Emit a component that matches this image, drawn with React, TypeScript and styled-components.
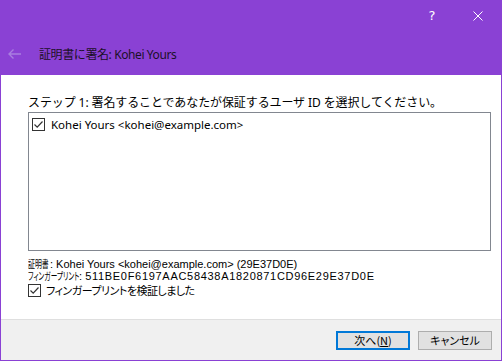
import React from "react";
import styled, { createGlobalStyle } from "styled-components";

const PURPLE = "#8a41d4";

const Global = createGlobalStyle`
  html, body { margin: 0; padding: 0; background: #ffffff; }
  body { font-family: "Noto Sans", "Noto Sans CJK JP", sans-serif; }
  * { box-sizing: border-box; }
`;

const Window = styled.div`
  width: 502px;
  height: 361px;
  display: flex;
  flex-direction: column;
  border: 1px solid ${PURPLE};
  border-top: none;
  background: #ffffff;
  overflow: hidden;
`;

const TitleBar = styled.div`
  height: 75px;
  background: ${PURPLE};
  display: flex;
  flex-direction: column;
`;

const CaptionRow = styled.div`
  height: 31px;
  display: flex;
  justify-content: flex-end;
  align-items: center;
`;

const CaptionButton = styled.div`
  width: 46px;
  height: 31px;
  display: flex;
  align-items: center;
  justify-content: center;
  color: #ffffff;
  font-family: "DejaVu Sans", sans-serif;
  font-size: 13px;
`;

const HeadingRow = styled.div`
  display: flex;
  align-items: center;
  height: 44px;
  padding: 2px 0 0 7px;
`;

const BackArrow = styled.div`
  width: 31px;
  display: flex;
  align-items: center;
`;

const Heading = styled.div`
  font-family: "Noto Sans", "Noto Sans CJK JP", sans-serif;
  font-size: 12px;
  color: #1b1028;
  letter-spacing: -0.4px;
`;

const Content = styled.div`
  flex: 1;
  display: flex;
  flex-direction: column;
  padding: 21px 10px 0 27px;
  font-family: "Noto Sans", "Noto Sans CJK JP", sans-serif;
  font-size: 12px;
  color: #000000;
`;

const StepText = styled.div`
  line-height: 14px;
  height: 16px;
  white-space: nowrap;
  letter-spacing: -0.1px;
`;

const ListBox = styled.div`
  height: 139px;
  border: 1px solid #828790;
  padding: 2px 3px;
`;

const CheckRow = styled.label<{ $gap: number; $h: number }>`
  display: flex;
  align-items: center;
  gap: ${(p) => p.$gap}px;
  height: ${(p) => p.$h}px;
`;

const Box = styled.span`
  width: 13px;
  height: 13px;
  border: 1px solid #333333;
  background: #ffffff;
  display: flex;
  align-items: center;
  justify-content: center;
  flex: none;
`;

const ItemText = styled.span`
  color: #000000;
  font-size: 11.5px;
`;

const CertInfo = styled.div`
  margin-top: 7px;
  font-family: "Liberation Sans", "Noto Sans CJK JP", sans-serif;
  font-size: 11px;
  line-height: 12px;
  display: flex;
  flex-direction: column;
`;

const CertLine = styled.div`
  white-space: nowrap;
  display: flex;
  align-items: center;
  height: 12px;
`;

const NarrowBox = styled.span<{ $w: number }>`
  display: inline-flex;
  align-items: center;
  width: ${(p) => p.$w}px;
  height: 12px;
  white-space: nowrap;
`;

const NarrowText = styled.span<{ $scale: number }>`
  display: inline-block;
  font-family: "Noto Sans CJK JP", sans-serif;
  font-size: 10.5px;
  line-height: 12px;
  font-feature-settings: "palt";
  transform: scaleX(${(p) => p.$scale});
  transform-origin: left center;
`;

const Hex = styled.span`
  letter-spacing: 0.7px;
`;

const Verify = styled.div`
  margin-top: 0;
`;

const VerifyText = styled.span`
  font-family: "Noto Sans CJK JP", sans-serif;
  font-size: 11px;
  letter-spacing: -0.5px;
  font-feature-settings: "palt";
`;

const Footer = styled.div`
  height: 41px;
  background: #f0f0f0;
  border-top: 1px solid #dfdfdf;
  display: flex;
  justify-content: flex-end;
  align-items: flex-start;
  gap: 8px;
  padding: 11px 9px 0 0;
`;

const Button = styled.button<{ $primary?: boolean }>`
  width: 74px;
  height: 19px;
  padding: 0;
  margin: 0;
  background: #e1e1e1;
  border: ${(p) => (p.$primary ? "2px solid #0078d7" : "1px solid #adadad")};
  font-family: "Noto Sans CJK JP", sans-serif;
  font-size: 11px;
  line-height: 15px;
  color: #000000;
  display: flex;
  align-items: center;
  justify-content: center;
  font-feature-settings: "palt";
`;

const Check = () => (
  <Box>
    <svg width="11" height="11" viewBox="0 0 11 11">
      <path d="M1.5 5.5 L4.2 8.2 L9.5 2.5" fill="none" stroke="#333" strokeWidth="1.2" />
    </svg>
  </Box>
);

export default function App() {
  return (
    <>
      <Global />
      <Window>
        <TitleBar>
          <CaptionRow>
            <CaptionButton>?</CaptionButton>
            <CaptionButton>
              <svg width="10" height="10" viewBox="0 0 10 10">
                <path d="M0.5 0.5 L9.5 9.5 M9.5 0.5 L0.5 9.5" stroke="#ffffff" strokeWidth="1" />
              </svg>
            </CaptionButton>
          </CaptionRow>
          <HeadingRow>
            <BackArrow>
              <svg width="14" height="10" viewBox="0 0 14 10">
                <path d="M1 5 H13 M5.5 0.5 L1 5 L5.5 9.5" fill="none" stroke="#a97ee0" strokeWidth="1.4" />
              </svg>
            </BackArrow>
            <Heading>証明書に署名: Kohei Yours</Heading>
          </HeadingRow>
        </TitleBar>
        <Content>
          <StepText>ステップ 1: 署名することであなたが保証するユーザ ID を選択してください。</StepText>
          <ListBox>
            <CheckRow $gap={6} $h={18}>
              <Check />
              <ItemText>Kohei Yours &lt;kohei@example.com&gt;</ItemText>
            </CheckRow>
          </ListBox>
          <CertInfo>
            <CertLine>
              <NarrowBox $w={22}>
                <NarrowText $scale={0.66}>証明書</NarrowText>
              </NarrowBox>
              : Kohei Yours &lt;kohei@example.com&gt; (29E37D0E)
            </CertLine>
            <CertLine>
              <NarrowBox $w={51}>
                <NarrowText $scale={0.63}>フィンガープリント</NarrowText>
              </NarrowBox>
              :&nbsp;<Hex>511BE0F6197AAC58438A1820871CD96E29E37D0E</Hex>
            </CertLine>
          </CertInfo>
          <Verify>
            <CheckRow $gap={5} $h={16}>
              <Check />
              <VerifyText>フィンガープリントを検証しました</VerifyText>
            </CheckRow>
          </Verify>
        </Content>
        <Footer>
          <Button $primary>
            次へ(<u>N</u>)
          </Button>
          <Button>キャンセル</Button>
        </Footer>
      </Window>
    </>
  );
}
